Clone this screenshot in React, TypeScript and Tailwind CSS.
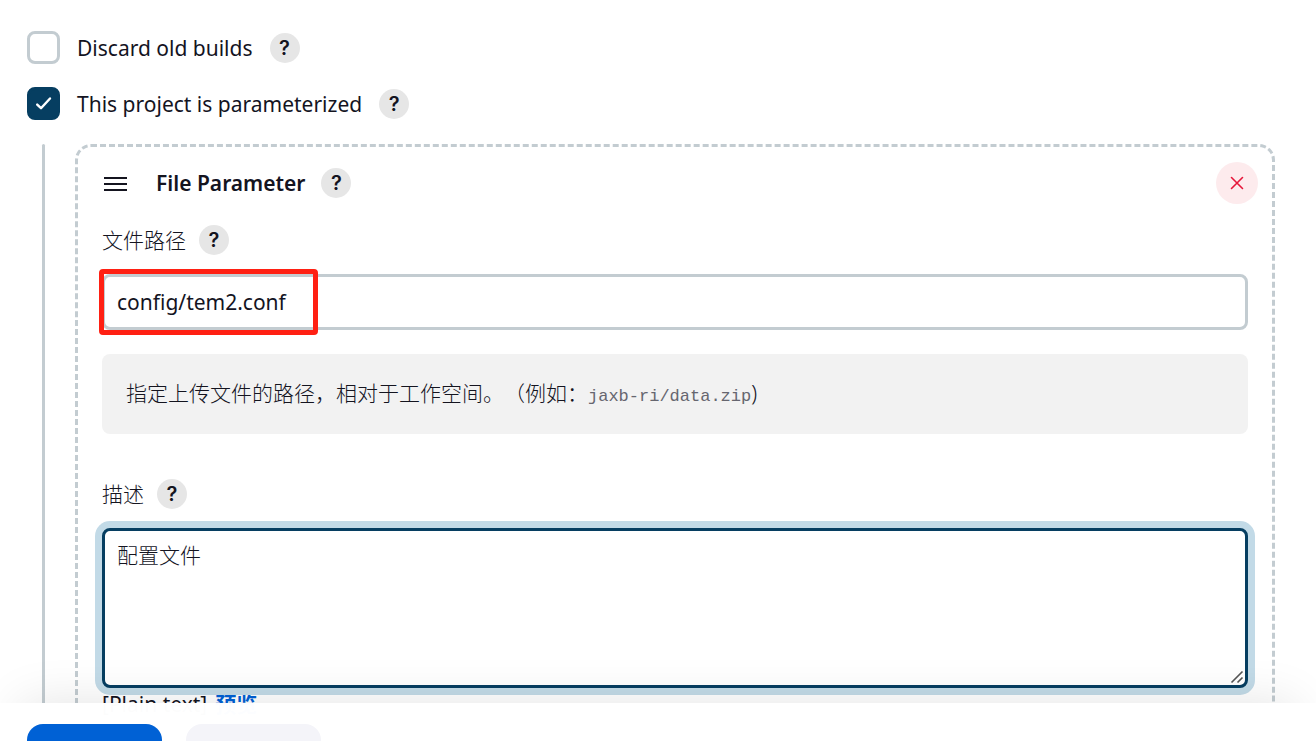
import type { ReactNode } from "react"

type HelpButtonProps = {
	topic: string
}

const HelpButton = ({ topic }: HelpButtonProps) => (
	<button
		type="button"
		aria-label={`Help for feature: ${topic}`}
		className="flex size-[30px] shrink-0 items-center justify-center rounded-full bg-[#e6e6e6] font-['Inter',sans-serif] text-xl leading-none font-semibold"
	>
		?
	</button>
)

type CheckRowProps = {
	id: string
	label: string
	defaultChecked?: boolean
}

const CheckRow = ({ id, label, defaultChecked }: CheckRowProps) => (
	<div className="flex h-[33px] items-center gap-[17px]">
		<label htmlFor={id} className="flex items-center gap-[17px]">
			<span className="relative flex size-[33px] shrink-0">
				<input
					id={id}
					type="checkbox"
					defaultChecked={defaultChecked}
					className="peer size-full appearance-none rounded-lg border-3 border-[#c3ccd1] bg-white checked:border-[#063e61] checked:bg-[#063e61]"
				/>
				<svg
					viewBox="0 0 33 33"
					fill="none"
					stroke="white"
					strokeWidth="2.4"
					strokeLinecap="round"
					strokeLinejoin="round"
					className="pointer-events-none absolute inset-0 hidden peer-checked:block"
				>
					<path d="M10.2 17.6 14 21.2 23 11.5" />
				</svg>
			</span>
			{label}
		</label>
		<HelpButton topic={label} />
	</div>
)

type FieldLabelProps = {
	htmlFor: string
	children: ReactNode
	topic: string
}

const FieldLabel = ({ htmlFor, children, topic }: FieldLabelProps) => (
	<div className="flex h-8 items-center gap-[13px]">
		<label htmlFor={htmlFor} className="font-light">
			{children}
		</label>
		<HelpButton topic={topic} />
	</div>
)

const FileParameter = () => (
	<section className="min-w-0 flex-1 rounded-2xl border-3 border-dashed border-[#c3ccd1] px-6 pt-5 pb-6">
		<header className="flex h-8 items-center">
			<svg
				viewBox="0 0 28 20"
				stroke="currentColor"
				strokeWidth="2"
				className="h-5 w-7"
				aria-hidden="true"
			>
				<path d="M2 5h23M2 11h23M2 17h23" />
			</svg>
			<h2 className="mr-4 ml-[26px] font-semibold">File Parameter</h2>
			<HelpButton topic="File Parameter" />
			<button
				type="button"
				aria-label="Delete"
				className="-mr-[10px] ml-auto flex size-[42px] items-center justify-center rounded-full bg-[#fdebed] text-[#e6173a]"
			>
				<svg
					viewBox="0 0 14 14"
					stroke="currentColor"
					strokeWidth="1.6"
					strokeLinecap="round"
					className="size-[14px]"
				>
					<path d="M1.5 1.5l11 11M12.5 1.5l-11 11" />
				</svg>
			</button>
		</header>

		<div className="mt-[25px] flex flex-col">
			<FieldLabel htmlFor="file-path" topic="文件路径">
				文件路径
			</FieldLabel>
			<div className="relative mt-[18px] flex">
				<input
					id="file-path"
					type="text"
					defaultValue="config/tem2.conf"
					className="h-14 w-full rounded-lg border-3 border-[#c3ccd1] bg-white px-3"
				/>
				<div className="pointer-events-none absolute -top-[5px] -left-[3px] h-[66px] w-[219px] rounded-[4px] border-5 border-[#ff2013]" />
			</div>
			<p className="mt-6 rounded-lg bg-[#f2f2f2] px-6 pt-[23px] pb-[25px] font-light [text-spacing-trim:space-all]">
				指定上传文件的路径，相对于工作空间。（例如：
				<code className="font-['Liberation_Mono',monospace] text-[17px] leading-none text-[#66666f]">
					jaxb-ri/data.zip
				</code>
				)
			</p>
		</div>

		<div className="mt-11 flex flex-col">
			<FieldLabel htmlFor="description" topic="描述">
				描述
			</FieldLabel>
			<div className="relative mt-[18px] flex">
				<textarea
					id="description"
					defaultValue="配置文件"
					className="h-40 w-full resize-none rounded-lg border-3 border-[#063e61] bg-white px-3 py-2 font-light shadow-[0_0_0_7px_#c2dae7] outline-none"
				/>
				<svg
					viewBox="0 0 14 14"
					stroke="#555"
					strokeWidth="1.6"
					className="pointer-events-none absolute right-1 bottom-1 size-[14px]"
				>
					<path d="M1.5 12.5l11-11M7.5 12.5l5-5" />
				</svg>
			</div>
			<div className="flex h-8 items-center gap-2">
				<span>[Plain text]</span>
				<a href="#preview" className="font-bold text-[#0061d5]">
					预览
				</a>
			</div>
		</div>
	</section>
)

const App = () => {
	return (
		<div className="flex h-screen flex-col overflow-hidden bg-white font-['Noto_Sans','Noto_Sans_CJK_SC',sans-serif] text-[21px] leading-8 text-[#14141f]">
			<main className="min-h-0 flex-1 pt-[31px] pr-[41px] pl-[27px]">
				<div className="flex flex-col gap-[23px]">
					<CheckRow id="discard" label="Discard old builds" />
					<CheckRow
						id="parameterized"
						label="This project is parameterized"
						defaultChecked
					/>
				</div>
				<div className="mt-6 flex gap-[30px] pl-[15px]">
					<div className="w-[3px] rounded-full bg-[#c3ccd1]" />
					<FileParameter />
				</div>
			</main>
			{/* sits over the form and runs past the bottom of the window */}
			<footer className="relative -mb-[60px] flex shrink-0 gap-6 bg-white/99 px-[27px] py-[21px] shadow-[0_-20px_50px_-20px_rgba(0,0,0,0.11)]">
				<button
					type="button"
					aria-label="Save"
					className="h-14 w-[135px] rounded-2xl bg-[#0061d5]"
				/>
				<button
					type="button"
					aria-label="Apply"
					className="h-14 w-[135px] rounded-2xl bg-[#f4f4f9]"
				/>
			</footer>
		</div>
	)
}
export default App
